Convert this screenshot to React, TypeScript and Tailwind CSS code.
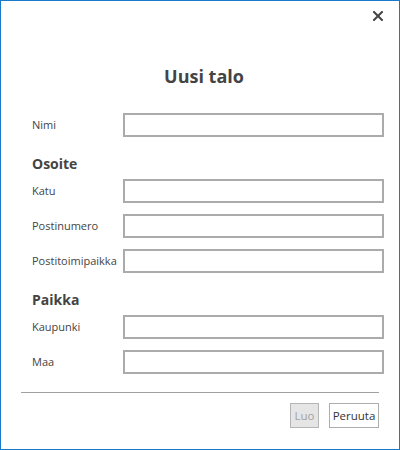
export default function App() {
  const font = { fontFamily: '"Open Sans", "Noto Sans", sans-serif' };

  const field = (label: string, mt: string) => (
    <div className={`flex items-center h-[24px] ${mt}`}>
      <label className="w-[91px] text-[11px] text-[#444444] whitespace-nowrap">{label}</label>
      <input className="flex-1 h-[24px] border-2 border-[#ababab] bg-white outline-none" />
    </div>
  );

  return (
    <div className="w-[400px] h-[450px] border border-[#1979ca] bg-white flex flex-col" style={font}>
      <div className="h-[29px] flex items-center justify-end pr-[16px]">
        <svg width="10" height="10" viewBox="0 0 10 10">
          <path d="M1 1L9 9M9 1L1 9" stroke="#444444" strokeWidth="2" strokeLinecap="square" />
        </svg>
      </div>

      <h1 className="mt-[32px] h-[28px] leading-[28px] text-center text-[18px] font-bold text-[#444444] pl-[8px]">
        Uusi talo
      </h1>

      <div className="pl-[31px] pr-[15px] flex flex-col">
        {field('Nimi', 'mt-[23px]')}

        <h2 className="mt-[17px] h-[20px] leading-[20px] text-[14px] font-bold text-[#444444]">Osoite</h2>
        {field('Katu', 'mt-[5px]')}
        {field('Postinumero', 'mt-[11px]')}
        {field('Postitoimipaikka', 'mt-[11px]')}

        <h2 className="mt-[17px] h-[20px] leading-[20px] text-[14px] font-bold text-[#444444]">Paikka</h2>
        {field('Kaupunki', 'mt-[5px]')}
        {field('Maa', 'mt-[11px]')}
      </div>

      <div className="mt-[18px] mx-[20px] h-px bg-[#a0a0a0]" />

      <div className="mt-[10px] mr-[20px] flex justify-end gap-[10px]">
        <button
          disabled
          className="w-[29px] h-[25px] border border-[#b5b5b5] bg-[#e5e5e5] text-[11.5px] text-[#a2a2a2]"
        >
          Luo
        </button>
        <button className="w-[50px] h-[25px] border border-[#adadad] bg-white text-[11.5px] text-[#333333]">
          Peruuta
        </button>
      </div>
    </div>
  );
}
